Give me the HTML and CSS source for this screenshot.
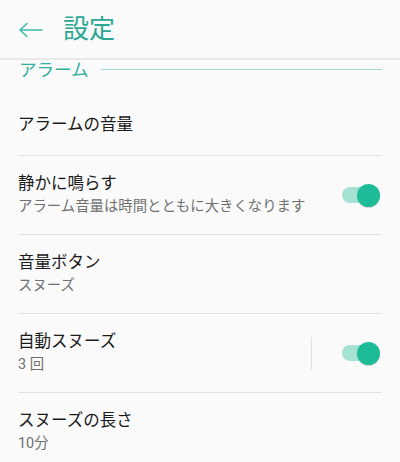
FILE: index.html
```html
<!DOCTYPE html>
<html lang="ja">
<head>
    <meta charset="UTF-8">
    <meta name="viewport" content="width=device-width, initial-scale=1.0">
    <title>設定</title>
    <link rel="stylesheet" href="styles.css">
</head>
<body>

    <div class="header">
        <svg class="back" width="26" height="16" viewBox="0 0 26 16">
            <path d="M24 8 H2 M9 1.5 L2 8 L9 14.5" fill="none" stroke="#3dbcab" stroke-width="1.6" stroke-linecap="round" stroke-linejoin="round"/>
        </svg>
        <h1>設定</h1>
    </div>

    <div class="section">
        <span>アラーム</span>
        <div class="section-line"></div>
    </div>

    <div class="list">
        <div class="row first">
            <div class="text">
                <div class="title">アラームの音量</div>
            </div>
        </div>
        <div class="row">
            <div class="text">
                <div class="title">静かに鳴らす</div>
                <div class="sub">アラーム音量は時間とともに大きくなります</div>
            </div>
            <div class="toggle"><div class="track"></div><div class="thumb"></div></div>
        </div>
        <div class="row">
            <div class="text">
                <div class="title">音量ボタン</div>
                <div class="sub">スヌーズ</div>
            </div>
        </div>
        <div class="row">
            <div class="text">
                <div class="title">自動スヌーズ</div>
                <div class="sub">3 回</div>
            </div>
            <div class="vline"></div>
            <div class="toggle"><div class="track"></div><div class="thumb"></div></div>
        </div>
        <div class="row last">
            <div class="text">
                <div class="title">スヌーズの長さ</div>
                <div class="sub">10分</div>
            </div>
        </div>
    </div>

</body>
</html>
```

FILE: styles.css
```css
body {
    font-family: Roboto, "Noto Sans CJK JP", sans-serif;
    background-color: #fafafa;
    margin: 0;
}
.header {
    height: 58px;
    display: flex;
    align-items: center;
    border-bottom: 2px solid #e8e8e8;
}
.back {
    margin-left: 18px;
    margin-top: 1px;
}
h1 {
    margin: 0 0 0 19px;
    font-size: 26px;
    font-weight: normal;
    color: #2aa894;
    line-height: 30px;
}
.section {
    height: 20px;
    display: flex;
    align-items: center;
    padding: 0 18px 0 19px;
}
.section span {
    font-size: 17.5px;
    color: #2fae9c;
    line-height: 20px;
}
.section-line {
    flex: 1;
    height: 1.5px;
    margin-left: 13px;
    margin-top: -1px;
    background-color: #a3d9d0;
}
.list {
    padding: 0 18px;
}
.row {
    display: flex;
    align-items: center;
    padding: 17px 0 17px;
    border-bottom: 1px solid #e2e2e2;
}
.row.first {
    padding: 34px 0 19px;
}
.row.last {
    border-bottom: none;
}
.text {
    flex: 1;
}
.title {
    font-size: 16.5px;
    line-height: 22px;
    color: #1a1a1a;
}
.sub {
    font-size: 14.4px;
    line-height: 20px;
    margin-top: 2px;
    color: #707070;
}
.vline {
    width: 1px;
    height: 33px;
    background-color: #e0e0e0;
    margin-right: 30px;
}
.toggle {
    position: relative;
    width: 38px;
    height: 23px;
    margin-right: 2px;
}
.track {
    position: absolute;
    left: 0;
    top: 3.5px;
    width: 33px;
    height: 16px;
    border-radius: 8px;
    background-color: #a5e2d4;
}
.thumb {
    position: absolute;
    right: 0;
    top: 0;
    width: 23px;
    height: 23px;
    border-radius: 50%;
    background-color: #1dbc98;
    box-shadow: 0 1px 1px rgba(0, 0, 0, 0.15);
}
```
